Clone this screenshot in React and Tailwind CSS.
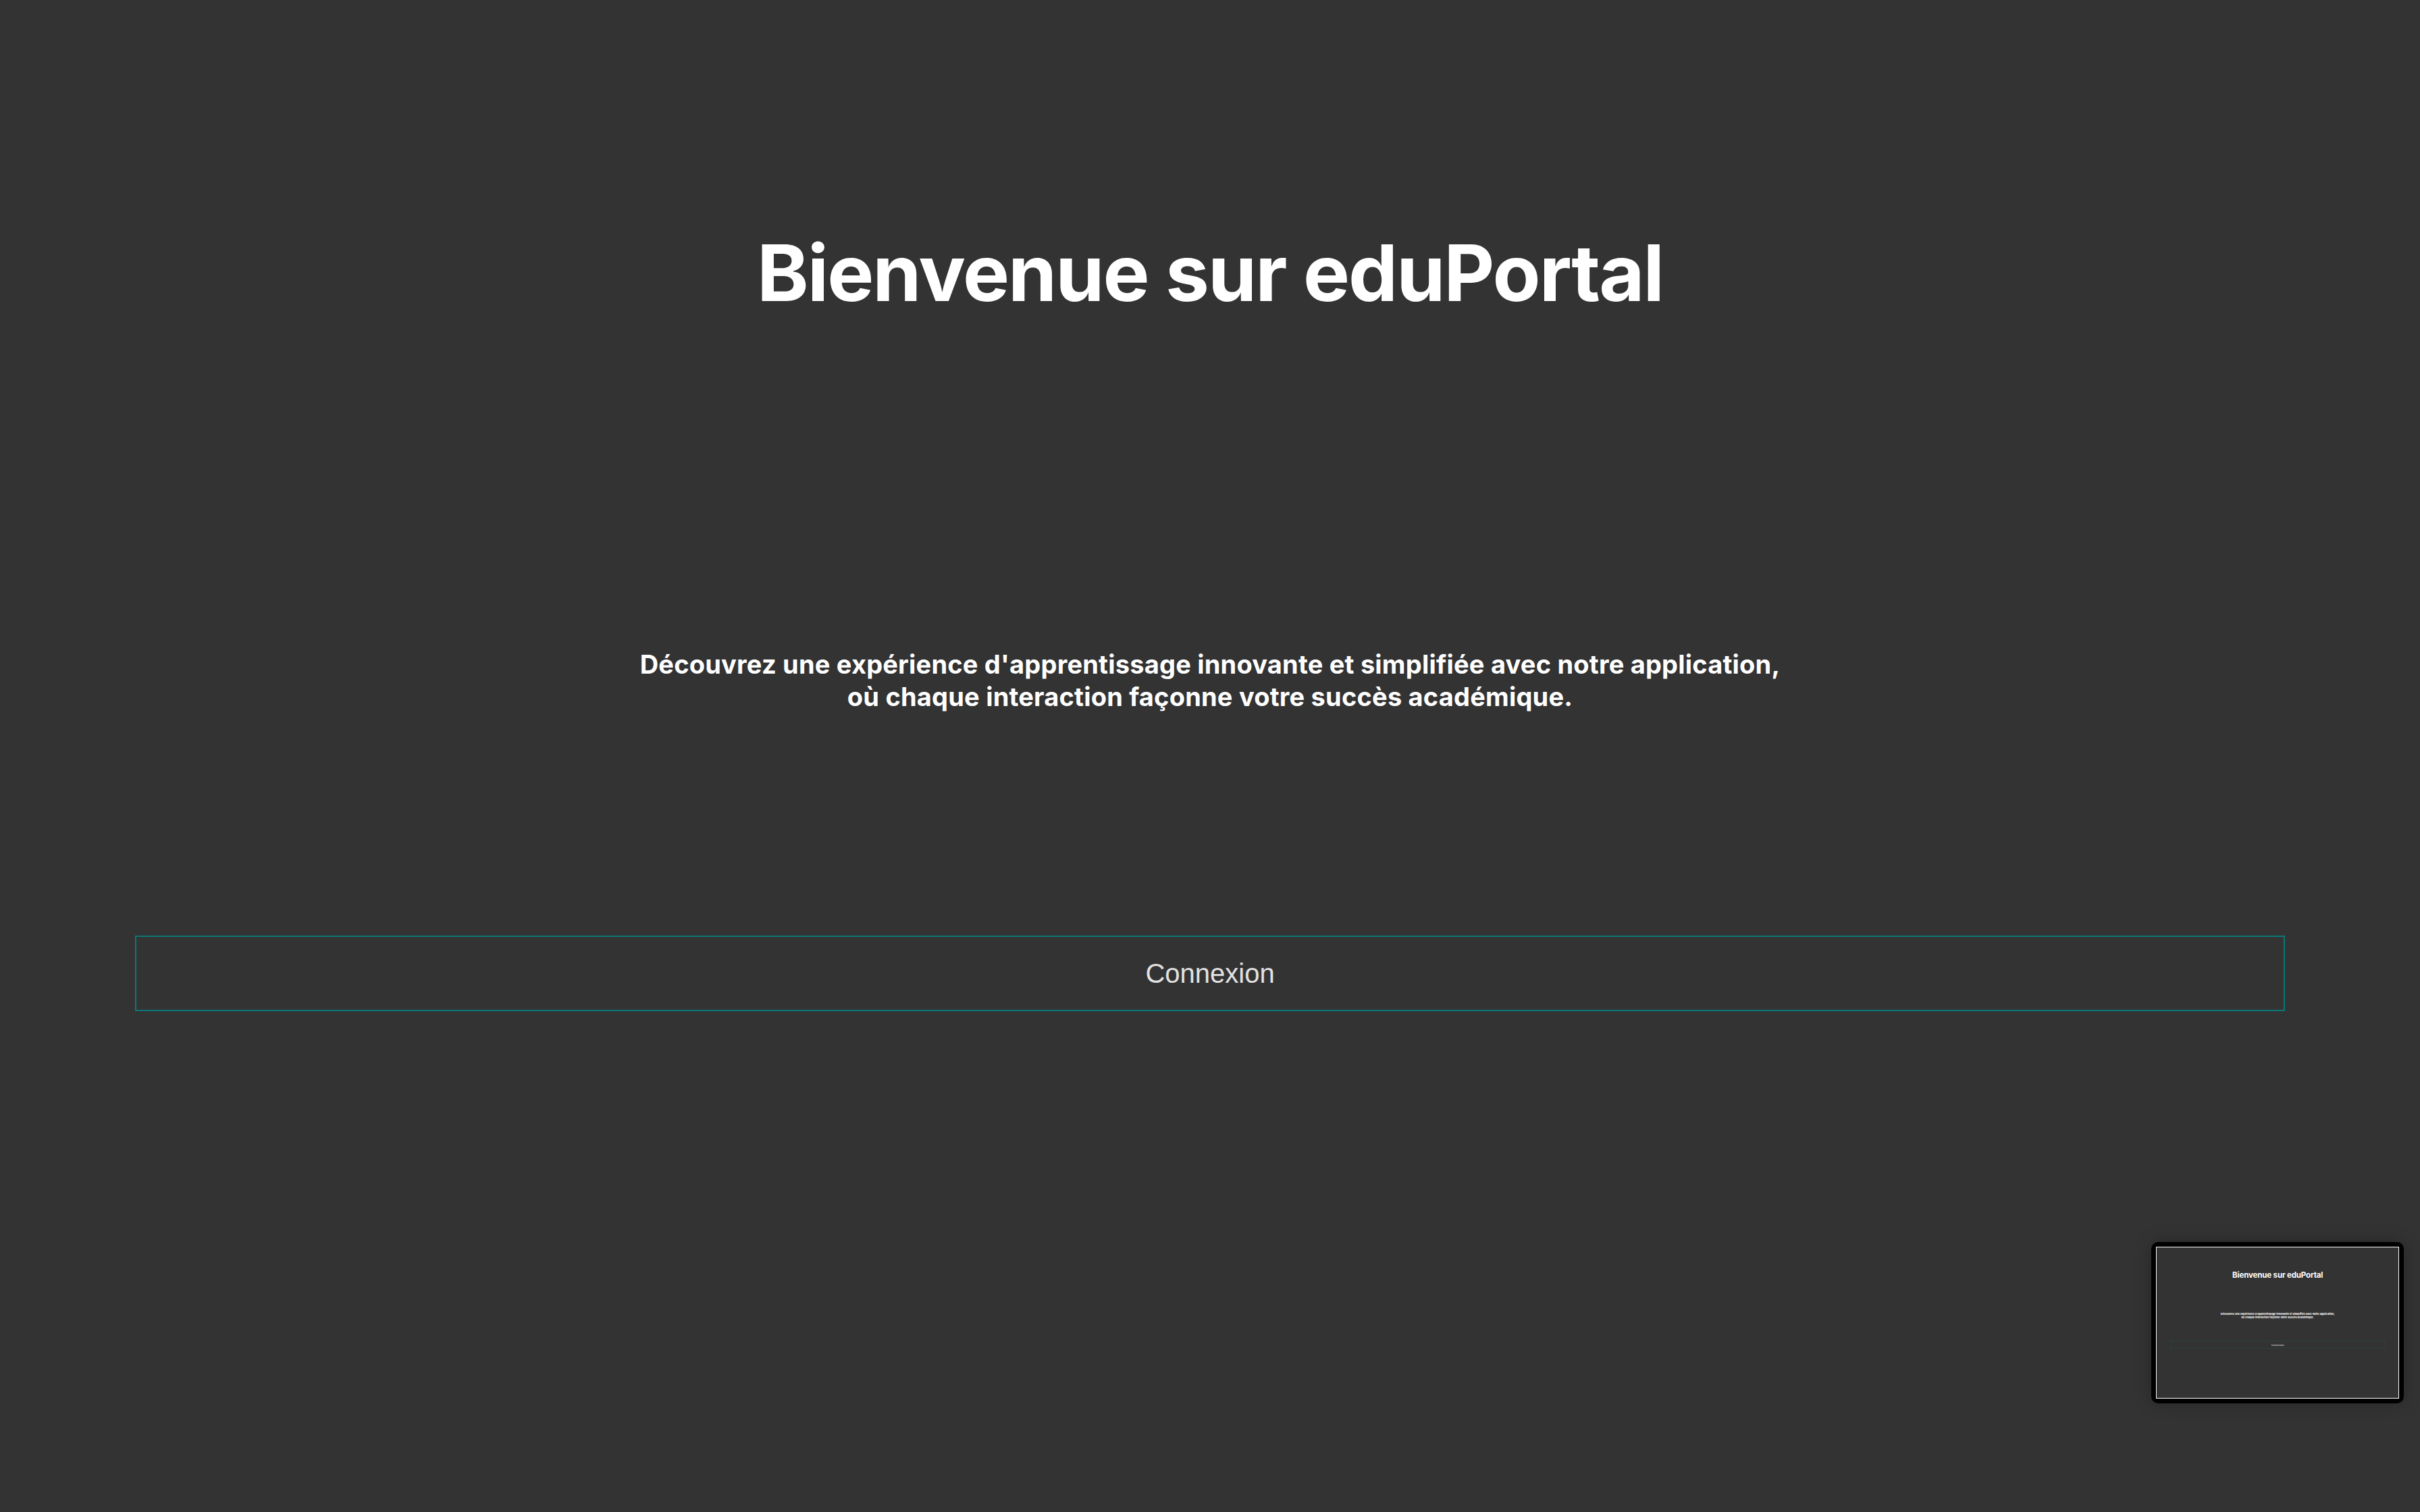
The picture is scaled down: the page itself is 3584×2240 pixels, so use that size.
import React from "react";

function Welcome({ fixed }) {
  return (
    <div
      className={
        (fixed ? "w-[3584px] h-[2240px] " : "w-full h-screen ") +
        "bg-[#333333] flex flex-col items-center font-['Inter',sans-serif]"
      }
    >
      <h1 className="mt-[346px] text-[116px] leading-none font-bold tracking-[-2px] text-white">
        Bienvenue sur eduPortal
      </h1>

      <p className="mt-[498px] text-[38px] leading-[48px] font-bold tracking-[0.2px] text-white text-center">
        Découvrez une expérience d'apprentissage innovante et simplifiée avec notre application,
        <br />
        où chaque interaction façonne votre succès académique.
      </p>

      <div className="mt-[330px] w-full px-[200px]">
        <button
          type="button"
          className="w-full h-[112px] border-2 border-[#0b7776] bg-transparent text-[40px] text-[#e2e2e2] font-['Liberation_Sans',Arial,sans-serif]"
        >
          Connexion
        </button>
      </div>
    </div>
  );
}

export default function App() {
  return (
    <div className="relative w-full h-screen overflow-hidden">
      <Welcome />

      {/* mini preview in the corner */}
      <div className="absolute right-[24px] bottom-[161px] rounded-[10px] bg-black p-[7px] shadow-[0_0_24px_rgba(0,0,0,0.25)]">
        <div className="w-[360px] h-[225px] border border-white overflow-hidden">
          <div className="origin-top-left scale-[0.1]">
            <Welcome fixed />
          </div>
        </div>
      </div>
    </div>
  );
}
